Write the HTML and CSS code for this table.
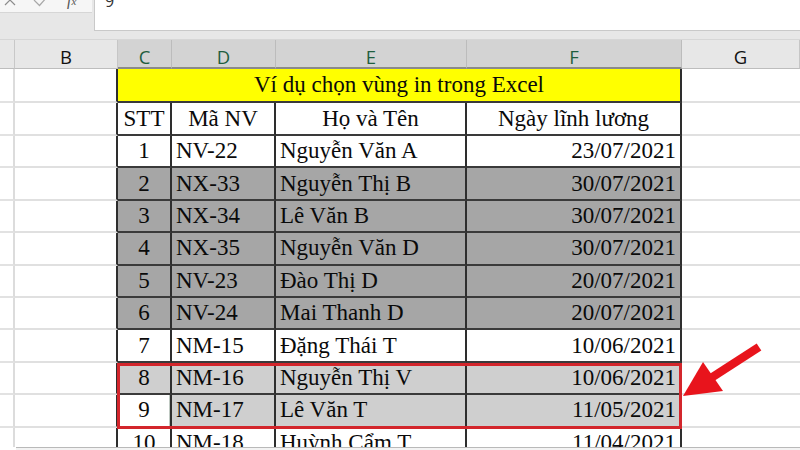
FILE: index.html
```html
<!DOCTYPE html>
<html lang="vi">
<head>
<meta charset="utf-8">
<title>Ví dụ chọn vùng in trong Excel</title>
<link rel="stylesheet" href="styles.css">
</head>
<body>
<div class="app">
  <div class="fbar">
    <div class="fb-tools">
      <div class="fb-btns">
        <svg width="92" height="12" viewBox="0 0 92 12">
          <path d="M5 -5 L15 5 M15 -5 L5 5" stroke="#8c8c8c" stroke-width="1.2" fill="none"/>
          <path d="M34 0 L39.5 5.5 L47 -3" stroke="#a8a8a8" stroke-width="1.2" fill="none"/>
          <text x="67" y="5" class="fx">f<tspan font-size="11">x</tspan></text>
        </svg>
      </div>
    </div>
    <div class="fb-input"><span class="fb-value">9</span></div>
  </div>
  <div class="strip"></div>
  <div class="sheet">
    <div class="grid">
      <!-- column headers -->
      <div class="cell rh corner"></div>
      <div class="cell hd">B</div>
      <div class="cell hd sel">C</div>
      <div class="cell hd sel">D</div>
      <div class="cell hd sel">E</div>
      <div class="cell hd sel">F</div>
      <div class="cell hd">G</div>

      <!-- title -->
      <div class="cell rh"></div>
      <div class="cell gb edge"></div>
      <div class="cell tc c yl title">Ví dụ chọn vùng in trong Excel</div>
      <div class="cell gg"></div>

      <!-- header -->
      <div class="cell rh"></div>
      <div class="cell gb edge"></div>
      <div class="cell tc c">STT</div>
      <div class="cell tc c">Mã NV</div>
      <div class="cell tc c">Họ và Tên</div>
      <div class="cell tc c">Ngày lĩnh lương</div>
      <div class="cell gg"></div>

      <!-- 1 -->
      <div class="cell rh"></div>
      <div class="cell gb edge"></div>
      <div class="cell tc c">1</div>
      <div class="cell tc l">NV-22</div>
      <div class="cell tc l">Nguyễn Văn A</div>
      <div class="cell tc r">23/07/2021</div>
      <div class="cell gg"></div>

      <!-- 2 -->
      <div class="cell rh"></div>
      <div class="cell gb edge"></div>
      <div class="cell tc c dk">2</div>
      <div class="cell tc l dk">NX-33</div>
      <div class="cell tc l dk">Nguyễn Thị B</div>
      <div class="cell tc r dk">30/07/2021</div>
      <div class="cell gg"></div>

      <!-- 3 -->
      <div class="cell rh"></div>
      <div class="cell gb edge"></div>
      <div class="cell tc c dk">3</div>
      <div class="cell tc l dk">NX-34</div>
      <div class="cell tc l dk">Lê Văn B</div>
      <div class="cell tc r dk">30/07/2021</div>
      <div class="cell gg"></div>

      <!-- 4 -->
      <div class="cell rh"></div>
      <div class="cell gb edge"></div>
      <div class="cell tc c dk">4</div>
      <div class="cell tc l dk">NX-35</div>
      <div class="cell tc l dk">Nguyễn Văn D</div>
      <div class="cell tc r dk">30/07/2021</div>
      <div class="cell gg"></div>

      <!-- 5 -->
      <div class="cell rh"></div>
      <div class="cell gb edge"></div>
      <div class="cell tc c dk">5</div>
      <div class="cell tc l dk">NV-23</div>
      <div class="cell tc l dk">Đào Thị D</div>
      <div class="cell tc r dk">20/07/2021</div>
      <div class="cell gg"></div>

      <!-- 6 -->
      <div class="cell rh"></div>
      <div class="cell gb edge"></div>
      <div class="cell tc c dk">6</div>
      <div class="cell tc l dk">NV-24</div>
      <div class="cell tc l dk">Mai Thanh D</div>
      <div class="cell tc r dk">20/07/2021</div>
      <div class="cell gg"></div>

      <!-- 7 -->
      <div class="cell rh"></div>
      <div class="cell gb edge"></div>
      <div class="cell tc c">7</div>
      <div class="cell tc l">NM-15</div>
      <div class="cell tc l">Đặng Thái T</div>
      <div class="cell tc r">10/06/2021</div>
      <div class="cell gg"></div>

      <!-- 8 -->
      <div class="cell rh"></div>
      <div class="cell gb edge"></div>
      <div class="cell tc c lt">8</div>
      <div class="cell tc l lt">NM-16</div>
      <div class="cell tc l lt">Nguyễn Thị V</div>
      <div class="cell tc r lt">10/06/2021</div>
      <div class="cell gg"></div>

      <!-- 9 -->
      <div class="cell rh"></div>
      <div class="cell gb edge"></div>
      <div class="cell tc c active">9</div>
      <div class="cell tc l lt">NM-17</div>
      <div class="cell tc l lt">Lê Văn T</div>
      <div class="cell tc r lt">11/05/2021</div>
      <div class="cell gg"></div>

      <!-- 10 -->
      <div class="cell rh"></div>
      <div class="cell gb edge"></div>
      <div class="cell tc c">10</div>
      <div class="cell tc l">NM-18</div>
      <div class="cell tc l">Huỳnh Cẩm T</div>
      <div class="cell tc r">11/04/2021</div>
      <div class="cell gg"></div>
    </div>

    <div class="print-box"></div>
    <svg class="arrow" width="800" height="407" viewBox="0 40 800 407">
      <line x1="711" y1="378" x2="759" y2="347" stroke="#e8141c" stroke-width="8.5"/>
      <polygon points="683,396 703,362 723,391" fill="#e8141c"/>
    </svg>
  </div>
  <div class="hscroll"></div>
</div>
</body>
</html>
```

FILE: styles.css
```css
html, body {
  margin: 0;
  padding: 0;
  width: 800px;
  height: 450px;
  overflow: hidden;
  background: #ffffff;
}

.app {
  display: flex;
  flex-direction: column;
  width: 800px;
  height: 450px;
}

/* formula bar */
.fbar {
  display: flex;
  flex: none;
  height: 31px;
  background: #e7e7e7;
}

.fb-tools {
  width: 94px;
  flex: none;
}

.fb-btns {
  width: 92px;
  height: 12px;
  background: #f6f6f6;
  border-bottom: 1px solid #d6d6d6;
}

.fb-btns svg {
  display: block;
}

.fx {
  font-family: "Liberation Serif", serif;
  font-style: italic;
  font-size: 16px;
  fill: #555555;
}

.fb-input {
  flex: 1;
  background: #ffffff;
  border-left: 1px solid #c9c9c9;
  border-bottom: 1px solid #c9c9c9;
  overflow: hidden;
}

.fb-value {
  display: block;
  margin-top: -7px;
  padding-left: 10px;
  font-family: "Open Sans", sans-serif;
  font-size: 16px;
  line-height: 16px;
  color: #333333;
}

.strip {
  flex: none;
  height: 8px;
  background: #e7e7e7;
  border-bottom: 1px solid #d6d6d6;
}

/* sheet */
.sheet {
  position: relative;
  flex: none;
  height: 407px;
  overflow: hidden;
  background: #ffffff;
}

.grid {
  display: grid;
  grid-template-columns: 15px 103px 54px 104px 191px 215px 118px;
  grid-template-rows: 29px 34px 33px repeat(10, 32.4px);
  font-family: "Liberation Serif", "Times New Roman", serif;
  font-size: 23px;
  color: #0a0a0a;
}

.cell {
  box-sizing: border-box;
  display: flex;
  align-items: center;
  white-space: nowrap;
  overflow: hidden;
}

.rh {
  background: #ffffff;
  border-right: 2px solid #dcdcdc;
  border-bottom: 2px solid #e2e2e2;
}

.rh.corner {
  background: #e7e7e7;
  border-right: 1px solid #c8c8c8;
  border-bottom: 1px solid #bdbdbd;
}

.hd {
  justify-content: center;
  padding-top: 5px;
  background: #e7e7e7;
  border-right: 1px solid #c6c6c6;
  border-bottom: 1px solid #bdbdbd;
  font-family: "Open Sans", "Liberation Sans", sans-serif;
  font-size: 18.5px;
  color: #111111;
}

.hd.sel {
  background: #d3d3d3;
  color: #1f5e3e;
  border-right: 1px solid #bcbcbc;
  border-bottom: 2px solid #8a8a8a;
}

.gb {
  border-bottom: 2px solid #e0e0e0;
}

.gb.edge {
  border-right: 2px solid #2e2e2e;
}

.gg {
  border-bottom: 2px solid #e0e0e0;
}

.tc {
  border-right: 2px solid #2e2e2e;
  border-bottom: 2px solid #3a3a3a;
  padding: 0 4px;
}

.title {
  grid-column: span 4;
}

.c { justify-content: center; }
.l { justify-content: flex-start; }
.r { justify-content: flex-end; }

.yl { background: #ffff00; }
.dk { background: #a6a6a6; }
.lt { background: #cfcfcf; }

.active {
  background: #ffffff;
  box-shadow: inset -1px 0 0 #bfc9c2;
}

/* overlays */
.print-box {
  position: absolute;
  left: 117px;
  top: 323px;
  width: 565px;
  height: 66px;
  box-sizing: border-box;
  border: 3px solid #d3262c;
  pointer-events: none;
}

.arrow {
  position: absolute;
  left: 0;
  top: 0;
  pointer-events: none;
}

.hscroll {
  flex: 1;
  margin-left: 16px;
  background: #f3f3f3;
  border-top: 1px solid #b9b9b9;
}
```
